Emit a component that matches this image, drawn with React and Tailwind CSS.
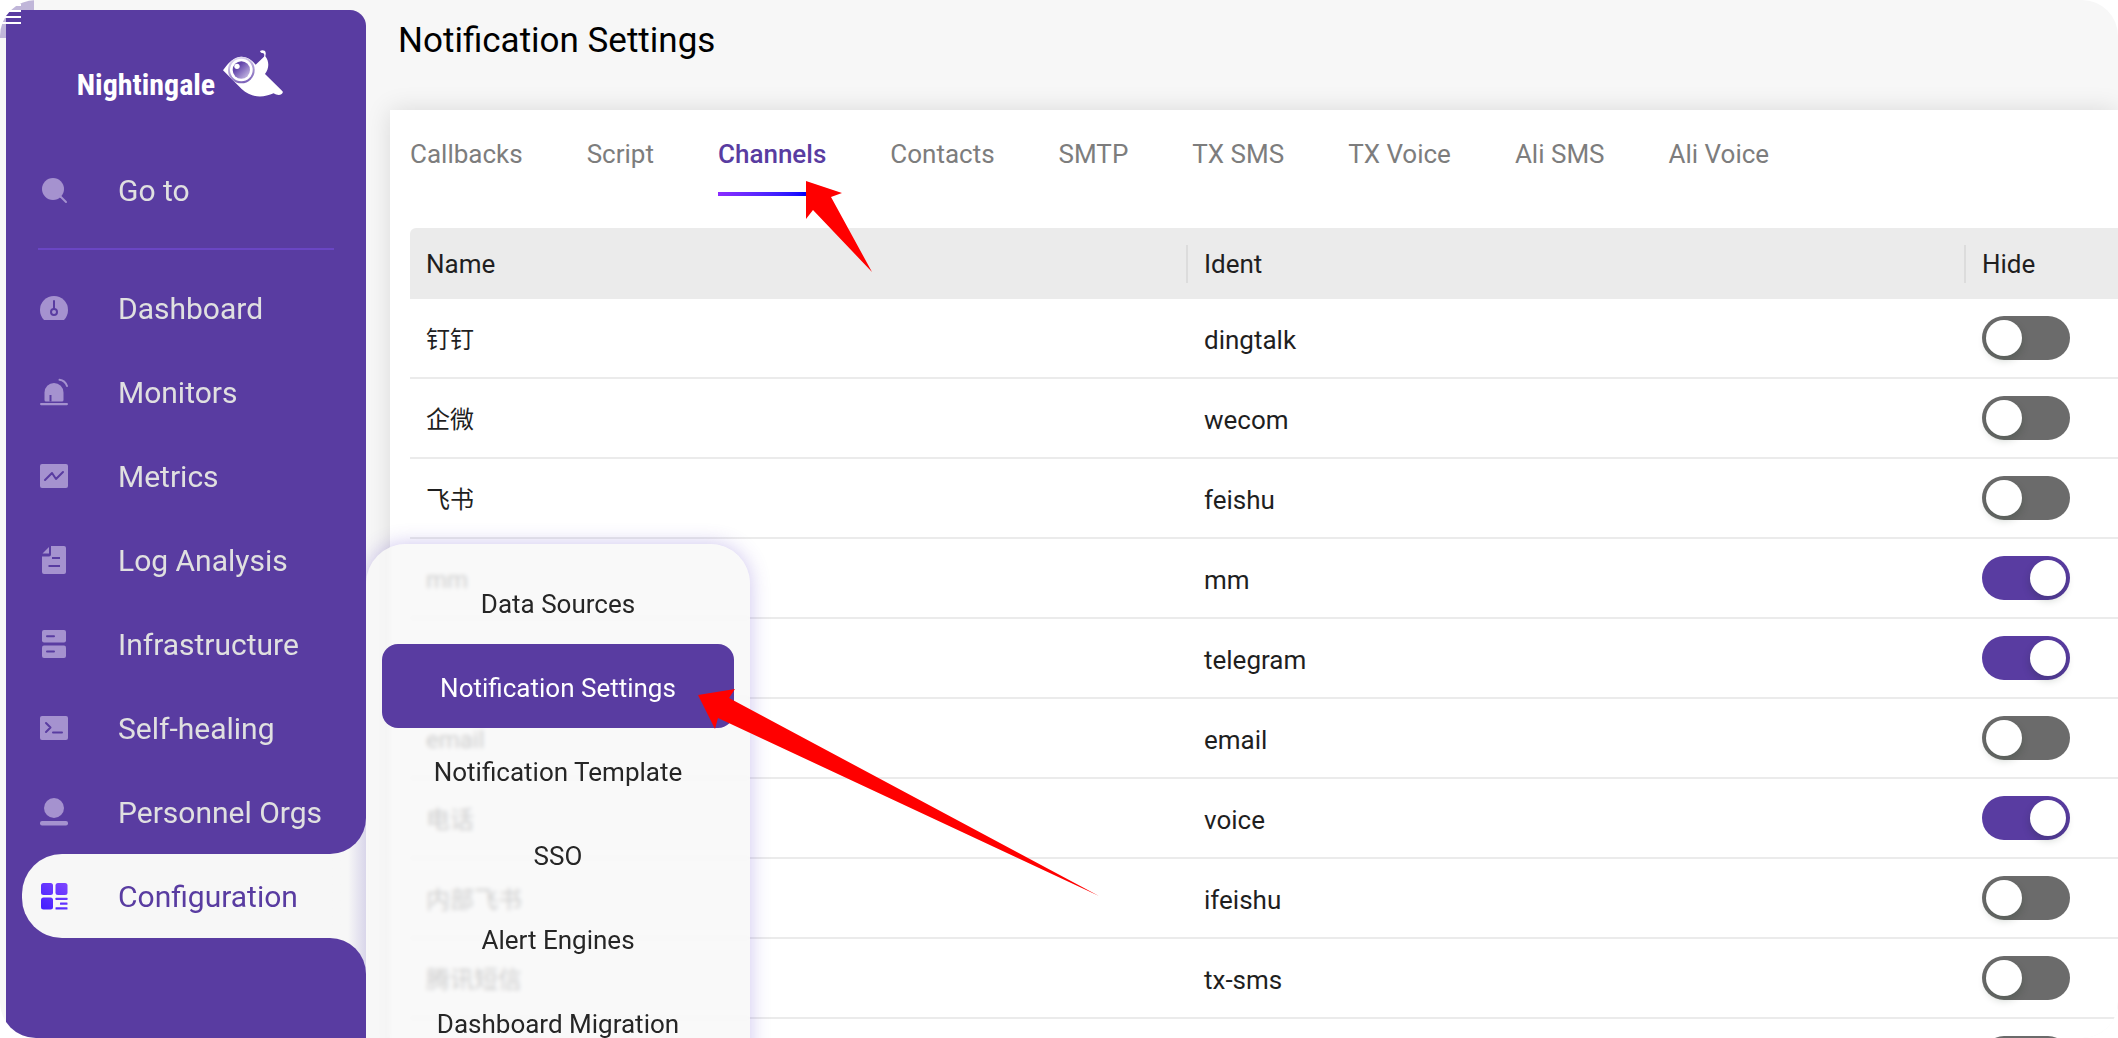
import { useState } from "react";

const P = "#593ca1";

function Icon({ children }) {
  return (
    <svg viewBox="0 0 28 28" className="mt-0.5 size-7 shrink-0 overflow-visible" fill="currentColor" aria-hidden="true">
      {children}
    </svg>
  );
}

const line = { fill: "none", stroke: P, strokeWidth: 2, strokeLinecap: "round", strokeLinejoin: "round" };

const icons = {
  search: (
    <Icon>
      <circle cx="13" cy="12" r="11" />
      <path d="M20.500 19.500 26 25" stroke="currentColor" strokeWidth="2" strokeLinecap="round" />
    </Icon>
  ),
  dashboard: (
    <Icon>
      <path d="M4 25C1.500 22.500 0 19 0 15a14 14 0 0 1 28 0c0 4-1.500 7.500-4 10Z" />
      <path d="M14 6v8" {...line} />
      <circle cx="14" cy="17" r="3" {...line} />
    </Icon>
  ),
  monitors: (
    <Icon>
      <path d="M4.500 21v-7.500a9.500 9.500 0 0 1 19 0V21q0 1.500-1.500 1.500H6q-1.500 0-1.500-1.500Z" />
      <path d="M10.500 16v6.500" {...line} strokeLinecap="butt" />
      <rect y="24" width="28" height="2.200" rx="1.100" />
      <path d="M19.500.8Q25 1.500 27 7" fill="none" stroke="currentColor" strokeWidth="2" strokeLinecap="round" />
    </Icon>
  ),
  metrics: (
    <Icon>
      <rect y="1" width="28" height="24" rx="2" />
      <path d="m5 17 7-7 4 6 7-7" {...line} />
    </Icon>
  ),
  log: (
    <Icon>
      <path d="M11-1h13q2 0 2 2v24q0 2-2 2H4q-2 0-2-2V9.500h7q2 0 2-2Z" />
      <path d="M2.500 6.500 9 0v6.500Z" />
      <path d="M12 11h8M8.500 19H20" {...line} strokeLinecap="butt" />
    </Icon>
  ),
  infra: (
    <Icon>
      <rect x="2" y="-1" width="24" height="12.500" rx="2" />
      <rect x="2" y="14.500" width="24" height="12.500" rx="2" />
      <path d="M7 5.300h7M7 20.500h7" {...line} />
    </Icon>
  ),
  terminal: (
    <Icon>
      <rect y="1" width="28" height="24" rx="2" />
      <path d="m6 8 4.500 4.500L6 17M13 17.500h9" {...line} />
    </Icon>
  ),
  person: (
    <Icon>
      <circle cx="14" cy="9" r="10" />
      <rect y="22" width="28" height="4.600" rx="2" />
    </Icon>
  ),
  config: (
    <Icon>
      <defs>
        <linearGradient id="cfg" x1="28" y1="0" x2="4" y2="28" gradientUnits="userSpaceOnUse">
          <stop offset="0" stopColor="#8046ff" />
          <stop offset="1" stopColor="#431fff" />
        </linearGradient>
      </defs>
      <g fill="url(#cfg)">
        <rect x="1" y="0" width="12" height="12" rx="2.500" />
        <rect x="15.500" y="0" width="12" height="12" rx="2.500" />
        <rect x="1" y="14.500" width="12" height="12" rx="2.500" />
        <rect x="15.500" y="14.800" width="12" height="2.200" rx=".5" />
        <rect x="20" y="19.500" width="7.500" height="2.200" rx=".5" />
        <rect x="15.500" y="24.200" width="12" height="2.200" rx=".5" />
      </g>
    </Icon>
  ),
};

const nav = [
  ["dashboard", "Dashboard"],
  ["monitors", "Monitors"],
  ["metrics", "Metrics"],
  ["log", "Log Analysis"],
  ["infra", "Infrastructure"],
  ["terminal", "Self-healing"],
  ["person", "Personnel Orgs"],
];

const submenu = ["Data Sources", "Notification Settings", "Notification Template", "SSO", "Alert Engines", "Dashboard Migration"];

const tabs = ["Callbacks", "Script", "Channels", "Contacts", "SMTP", "TX SMS", "TX Voice", "Ali SMS", "Ali Voice"];

const initialRows = [
  ["钉钉", "dingtalk", false],
  ["企微", "wecom", false],
  ["飞书", "feishu", false],
  ["mm", "mm", true],
  ["", "telegram", true],
  ["email", "email", false],
  ["电话", "voice", true],
  ["内部飞书", "ifeishu", false],
  ["腾讯短信", "tx-sms", false],
  ["", "", false],
];

function Bird() {
  return (
    <svg viewBox="672 147 180 141" className="-mt-5 w-15 shrink-0" aria-hidden="true">
      <defs>
        <linearGradient id="lens" x1="0" y1="0" x2="1" y2="1">
          <stop offset="0.300" stopColor="#6245aa" />
          <stop offset="1" stopColor="#d5cbec" />
        </linearGradient>
        <linearGradient id="rim" x1="0.300" y1="0" x2="0.600" y2="1">
          <stop offset="0" stopColor="#e6e0f4" />
          <stop offset="1" stopColor="#7a60b8" />
        </linearGradient>
      </defs>
      <path
        fill="#fff"
        d="M672 208C684 190 700 170 726 167C748 167 760 179 770 191L795 167C796 162 797 160 793 157C788 156 784 155 783 150C790 146 799 148 800 155C801 159 799 162 799 166C811 181 811 202 798 219L849 269C853 272 852 276 848 279C841 284 833 282 824 277C792 291 756 291 728 264Z"
      />
      <circle cx="727" cy="207" r="40" fill="url(#rim)" />
      <circle cx="727" cy="207" r="34" fill="#fff" />
      <circle cx="727" cy="207" r="26" fill="url(#lens)" />
      <circle cx="714" cy="196" r="8" fill="#fff" />
    </svg>
  );
}

function Sidebar() {
  return (
    <aside className="relative z-20 mt-2.5 ml-1.5 flex w-90 shrink-0 flex-col rounded-tr-2xl bg-[#593ca1] text-[30px] text-[#e0e0e0]">
      <div className="flex h-[138px] items-center justify-center gap-2 pt-2 pr-3">
        <span className="pt-1 font-['Roboto_Condensed','Liberation_Sans_Narrow',sans-serif] text-[30px] leading-none font-bold text-white">
          Nightingale
        </span>
        <Bird />
      </div>
      <button type="button" className="flex h-21 items-center gap-[50px] pl-[34px] text-left">
        <span className="text-[#a592cf]">{icons.search}</span>
        Go to
      </button>
      <hr className="mx-8 my-4 border-t-2 border-[#6a46c4]" />
      <nav className="flex flex-col">
        {nav.map(([icon, label]) => (
          <a key={label} href="#" className="flex h-21 items-center gap-[50px] pl-[34px]">
            <span className="text-[#a592cf]">{icons[icon]}</span>
            {label}
          </a>
        ))}
        <a href="#" aria-current="page" className="relative ml-4 flex h-21 items-center gap-[50px] rounded-l-[40px] bg-[#f7f7f7] pl-[18px] text-[#593ca1]">
          <span className="absolute -top-9 right-0 h-39 w-9 bg-linear-to-r from-[#f7f7f7] from-50% to-[#d9d6ea]" />
          <span className="absolute -top-9 right-0 size-9 rounded-br-full bg-[#593ca1]" />
          <span className="absolute right-0 -bottom-9 size-9 rounded-tr-full bg-[#593ca1]" />
          {icons.config}
          Configuration
        </a>
      </nav>
    </aside>
  );
}

function Submenu() {
  return (
    <div className="absolute top-[544px] left-[366px] z-10 flex w-96 flex-col rounded-t-[40px] bg-[#f8f8f8]/80 px-4 pt-4 pb-10 text-[26px] text-[#262626] shadow-[0_0_20px_rgba(89,60,200,0.3)] backdrop-blur-[2px]">
      {submenu.map((label) => (
        <a
          key={label}
          href="#"
          className={
            label === "Notification Settings"
              ? "flex h-21 items-center justify-center rounded-2xl bg-[#593ca1] pt-1 text-white"
              : "flex h-21 items-center justify-center pt-1"
          }
        >
          {label}
        </a>
      ))}
    </div>
  );
}

export default function App() {
  const [rows, setRows] = useState(initialRows);
  const toggle = (i) => setRows(rows.map((r, j) => (j === i ? [r[0], r[1], !r[2]] : r)));

  return (
    <div className="relative flex h-screen overflow-hidden rounded-[36px] bg-[#f7f7f7] font-[Roboto,'Noto_Sans_CJK_SC',sans-serif]">
      <Sidebar />

      <button type="button" aria-label="Toggle menu" className="absolute top-0 left-0 z-30 flex h-[38px] w-[34px] flex-col gap-1 bg-[#593ca1]/35 pt-1">
        <span className="h-0.5 w-[21px] bg-white" />
        <span className="h-0.5 w-[21px] bg-white" />
        <span className="h-0.5 w-[21px] bg-white" />
        <span className="h-0.5 w-[21px] bg-white" />
      </button>

      <main className="flex min-w-0 grow flex-col">
        <h1 className="flex h-[110px] shrink-0 items-center pb-7 pl-8 text-[35px] text-black">Notification Settings</h1>
        <section className="ml-6 grow bg-white pl-5 shadow-[0_0_24px_rgba(0,0,0,0.12)]">
          <div role="tablist" className="flex gap-16 text-[26px] text-[#7d7d7d]">
            {tabs.map((t) => (
              <button
                key={t}
                type="button"
                role="tab"
                aria-selected={t === "Channels"}
                className={
                  t === "Channels"
                    ? "relative h-[86px] pt-0.5 font-medium text-[#593ca1] after:absolute after:inset-x-0 after:bottom-0 after:h-1 after:bg-linear-to-r after:from-[#8a2bff] after:to-[#0000ff] after:to-80%"
                    : "h-[86px] pt-0.5"
                }
              >
                {t}
              </button>
            ))}
          </div>

          <table className="mt-8 w-full table-fixed border-separate border-spacing-0 text-left text-[26px] text-[#1f1f1f]">
            <colgroup>
              <col className="w-[45.55%]" />
              <col className="w-[45.55%]" />
              <col />
            </colgroup>
            <thead>
              <tr className="h-[71px]">
                <th className="rounded-tl-md bg-[#ebebeb] py-4 pl-4 font-normal">
                  <div className="border-r-2 border-[#dcdcdc] leading-[38px]">Name</div>
                </th>
                <th className="bg-[#ebebeb] py-4 pl-4 font-normal">
                  <div className="border-r-2 border-[#dcdcdc] leading-[38px]">Ident</div>
                </th>
                <th className="bg-[#ebebeb] py-4 pl-4 leading-[38px] font-normal">Hide</th>
              </tr>
            </thead>
            <tbody>
              {rows.map(([name, ident, on], i) => (
                <tr key={i} className="h-20">
                  <td className="border-b-2 border-[#ebebeb] pt-1 pl-4 text-2xl">{name}</td>
                  <td className="border-b-2 border-[#ebebeb] pt-1 pl-4">{ident}</td>
                  <td className="border-b-2 border-[#ebebeb] pl-4">
                    <input
                      type="checkbox"
                      role="switch"
                      aria-label={`Hide ${ident}`}
                      checked={on}
                      onChange={() => toggle(i)}
                      className="block h-11 w-22 appearance-none rounded-full bg-[#6b6b6b] p-1 before:block before:size-9 before:rounded-full before:bg-white before:shadow-[0_4px_8px_rgba(0,35,11,0.2)] checked:bg-[#593ca1] checked:before:ml-11"
                    />
                  </td>
                </tr>
              ))}
            </tbody>
          </table>
        </section>
      </main>

      <Submenu />

      <svg viewBox="0 0 68 92" className="pointer-events-none absolute top-[181px] left-[806px] z-30 w-17 overflow-visible" fill="#ff0000" aria-hidden="true">
        <path d="M0 0 36 12 25 16 66 91 7 29 0 38Z" />
      </svg>
      <svg viewBox="0 0 400 208" className="pointer-events-none absolute top-[689px] left-[698px] z-30 w-100 overflow-visible" fill="#ff0000" aria-hidden="true">
        <path d="M0 6 37 0 31 9 401 207 20 29 17 40Z" />
      </svg>
    </div>
  );
}
